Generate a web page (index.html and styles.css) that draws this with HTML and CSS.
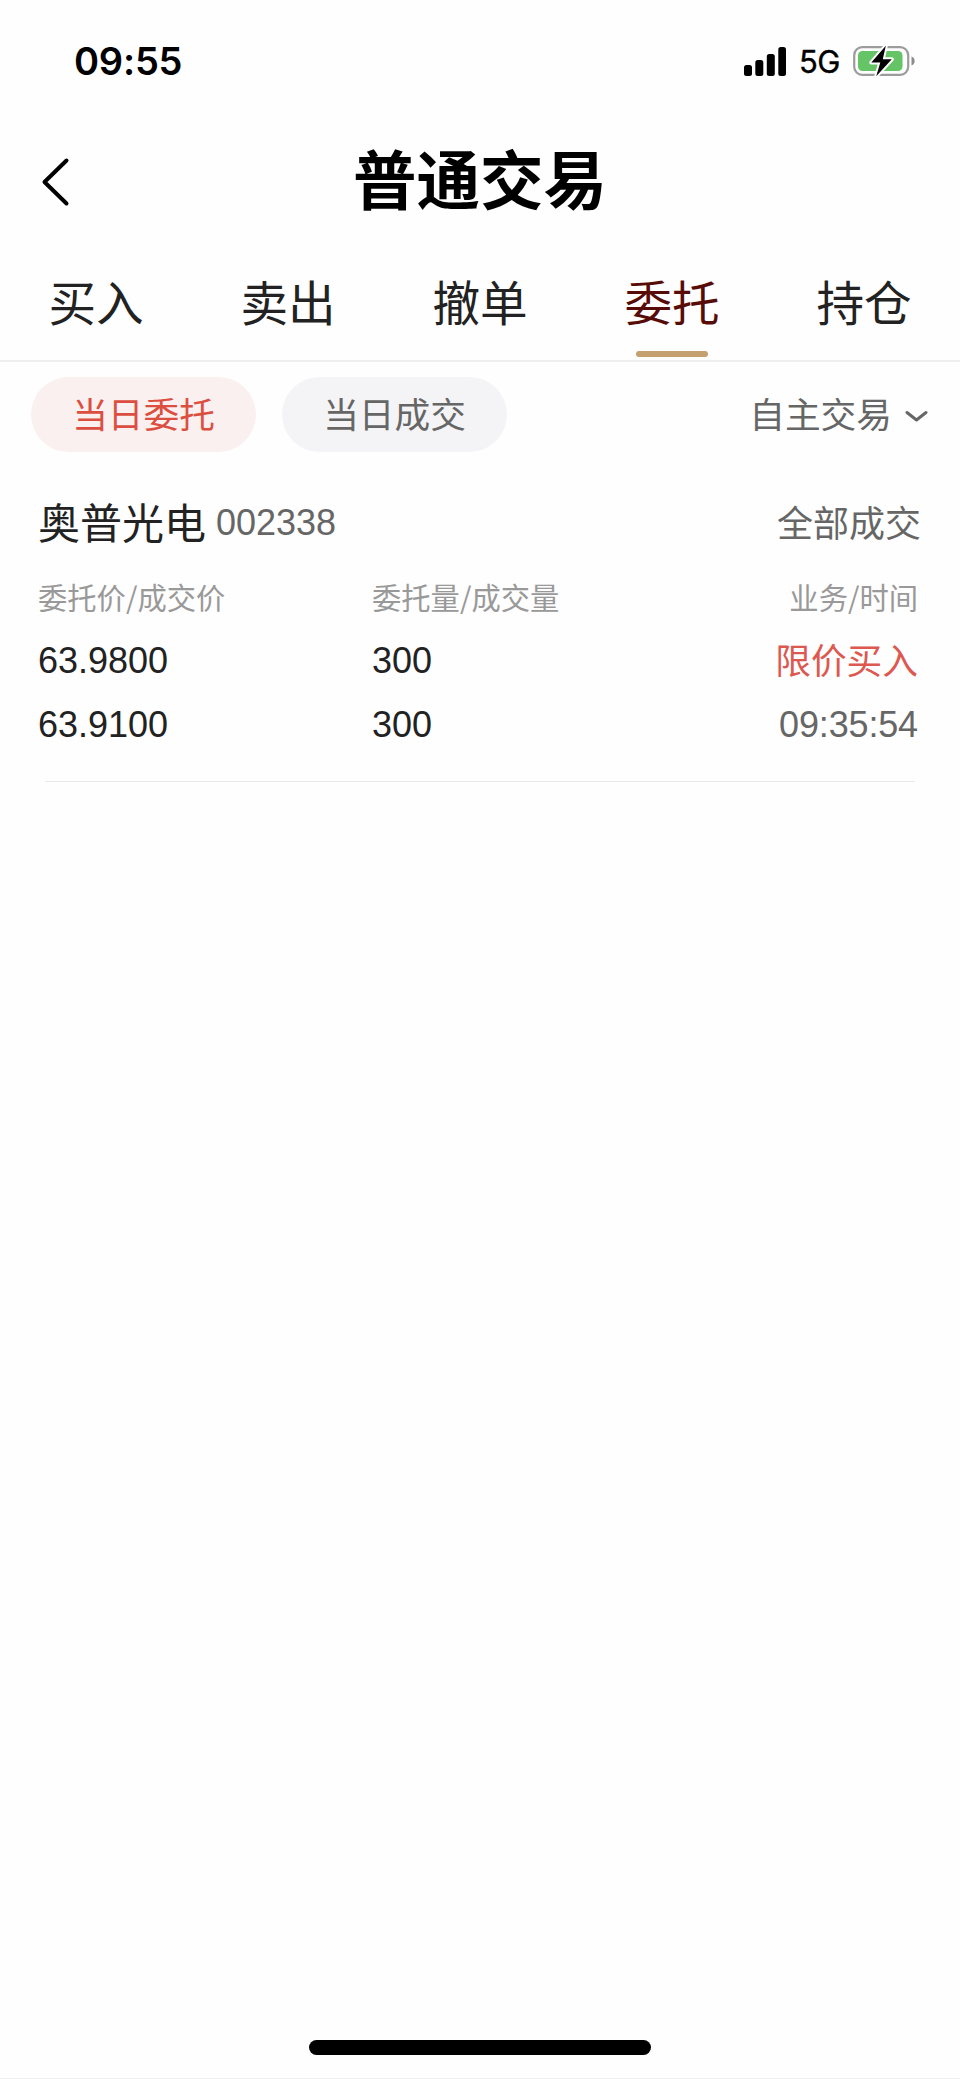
FILE: index.html
```html
<!DOCTYPE html>
<html lang="zh-CN">
<head>
<meta charset="utf-8">
<title>普通交易</title>
<link rel="stylesheet" href="styles.css">
</head>
<body>
<div class="screen">
  <header class="status-bar">
    <span class="clock">09:55</span>
    <div class="status-icons">
      <svg class="signal" width="42" height="29" viewBox="0 0 42 29">
        <rect x="0" y="18" width="8" height="11" rx="2.5"/>
        <rect x="11.3" y="13" width="8" height="16" rx="2.5"/>
        <rect x="22.8" y="7" width="8" height="22" rx="2.5"/>
        <rect x="34.3" y="0" width="7.7" height="29" rx="2.5"/>
      </svg>
      <span class="network">5G</span>
      <svg class="battery" width="63" height="32" viewBox="0 0 63 32">
        <rect x="2.200" y="2.200" width="54" height="27.600" rx="8" fill="none" stroke="#9c9c9c" stroke-width="2.200"/>
        <rect x="6" y="6" width="44.500" height="20" rx="4.5" fill="#65c466"/>
        <path d="M59.500 11.5c4.200 1.3 4.200 7.700 0 9z" fill="#8c8c8c"/>
        <path d="M33.800.8L19.300 17.500h9L24.200 31.200 39.800 14.300h-9z" fill="#000" stroke="#fff" stroke-width="4" stroke-linejoin="round" paint-order="stroke"/>
      </svg>
    </div>
  </header>

  <div class="nav-bar">
    <svg class="back" width="30" height="52" viewBox="0 0 30 52">
      <path d="M26.500 4.500L4.500 26l22 21.500" fill="none" stroke="#000" stroke-width="4" stroke-linecap="round" stroke-linejoin="round"/>
    </svg>
    <h1 class="title">普通交易</h1>
  </div>

  <nav class="tabs">
    <span class="tab">买入</span>
    <span class="tab">卖出</span>
    <span class="tab">撤单</span>
    <span class="tab tab-active">委托</span>
    <span class="tab">持仓</span>
  </nav>

  <div class="filters">
    <span class="chip chip-active">当日委托</span>
    <span class="chip">当日成交</span>
    <div class="select">
      <span>自主交易</span>
      <svg class="chevron" width="23" height="13" viewBox="0 0 23 13">
        <path d="M2 2.500l9.500 7.500L21 2.500" fill="none" stroke="#666" stroke-width="3" stroke-linecap="round" stroke-linejoin="round"/>
      </svg>
    </div>
  </div>

  <main class="order">
    <div class="order-head">
      <span class="stock-name">奥普光电</span>
      <span class="stock-code">002338</span>
      <span class="order-state">全部成交</span>
    </div>
    <div class="order-grid">
      <span class="label">委托价/成交价</span>
      <span class="label">委托量/成交量</span>
      <span class="label end">业务/时间</span>
      <span class="num">63.9800</span>
      <span class="num">300</span>
      <span class="side end">限价买入</span>
      <span class="num">63.9100</span>
      <span class="num">300</span>
      <span class="num time end">09:35:54</span>
    </div>
  </main>

  <footer class="home-area"><div class="home-indicator"></div></footer>
</div>
</body>
</html>
```

FILE: styles.css
```css
* { box-sizing: border-box; }
body {
  margin: 0;
  background: #fefefe;
  font-family: "Noto Sans CJK SC", sans-serif;
  color: #222;
}
.screen {
  width: 960px;
  height: 2079px;
  display: flex;
  flex-direction: column;
  overflow: hidden;
}
.status-bar {
  height: 122px;
  padding: 0 45px 0 74px;
  display: flex;
  align-items: center;
  justify-content: space-between;
  color: #000;
}
.clock {
  font: 600 38px/44px Inter, sans-serif;
  letter-spacing: -0.2px;
}
.status-icons { display: flex; align-items: center; }
.network {
  margin: 2px 12px 0 13px;
  font: 400 31px/36px Inter, sans-serif;
  letter-spacing: -0.5px;
  -webkit-text-stroke: 0.4px #000;
}
.nav-bar {
  height: 118px;
  display: grid;
  grid-template-columns: 120px 1fr 120px;
  align-items: center;
}
.back { margin: 2px 0 0 40px; }
.title {
  margin: 0 0 11px;
  text-align: center;
  color: #000;
  font-size: 63.5px;
  line-height: 90px;
  font-weight: 700;
}
.tabs {
  height: 122px;
  display: grid;
  grid-template-columns: repeat(5, 1fr);
  border-bottom: 2px solid #eee;
}
.tab {
  display: flex;
  flex-direction: column;
  align-items: center;
  justify-content: space-between;
  padding: 29px 0 3px;
  font-size: 47.6px;
  line-height: 64px;
}
.tab-active { color: #580c08; }
.tab-active::after {
  content: "";
  width: 72px;
  height: 6px;
  border-radius: 3px;
  background: #c4a06e;
}
.filters {
  display: flex;
  align-items: center;
  gap: 26px;
  padding: 15px 32px 0 31px;
  font-size: 35.7px;
  line-height: 71px;
  color: #666;
}
.chip {
  width: 225px;
  height: 75px;
  border-radius: 38px;
  text-align: center;
  background: #f4f4f7;
}
.chip-active { background: #fbf0f0; color: #dc4f40; }
.select { display: flex; align-items: center; gap: 13px; margin-left: auto; }
.select span { margin-bottom: 4px; }
.chevron { margin-top: 3px; }
.order { margin: 36px 38px 0; }
.order-head {
  display: flex;
  align-items: center;
  height: 68px;
}
.stock-name { font-size: 42px; line-height: 60px; margin-bottom: 2px; }
.stock-code {
  margin: 2px 0 0 10px;
  font: 36px/60px "Liberation Sans", sans-serif;
  color: #666;
}
.order-state {
  margin: 0 1px 3px auto;
  font-size: 36px;
  line-height: 60px;
  color: #666;
}
.order-grid {
  display: grid;
  grid-template-columns: 334px 1fr auto;
  grid-template-rows: 73px 64px 64px;
  align-items: center;
}
.end { justify-self: end; margin-right: 4px; }
.label { font-size: 29.3px; line-height: 40px; margin-top: 7px; color: #999; }
.num { font: 36px/64px "Liberation Sans", sans-serif; }
.time { color: #666; letter-spacing: -0.15px; }
.side { font-size: 35.7px; line-height: 60px; margin-bottom: 4px; color: #dc5850; }
.order::after {
  content: "";
  display: block;
  height: 1px;
  margin: 24px 7px 0;
  background: #e9e9e9;
}
.home-area {
  margin-top: auto;
  height: 39px;
  border-bottom: 1px solid #eee;
}
.home-indicator {
  width: 342px;
  height: 15px;
  margin: 0 auto;
  border-radius: 8px;
  background: #000;
}
```
